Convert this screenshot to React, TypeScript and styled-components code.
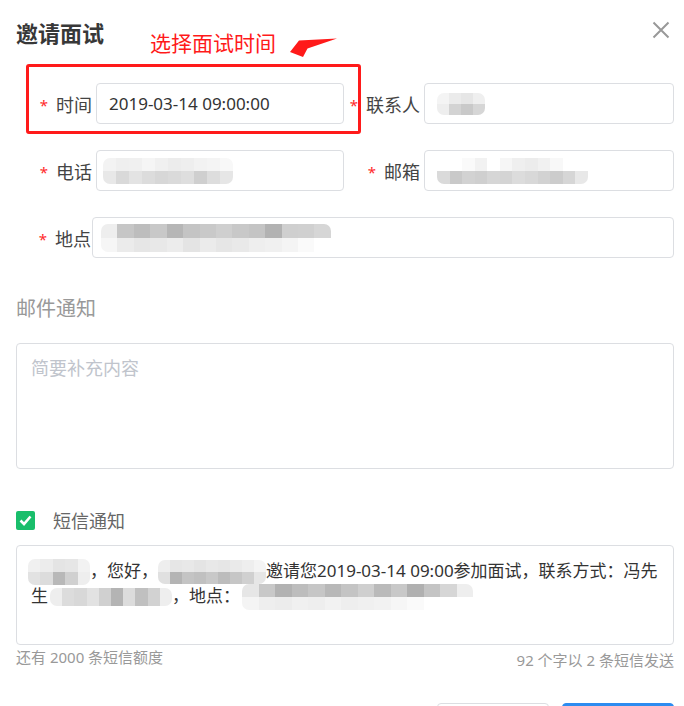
import React from 'react';
import styled, { createGlobalStyle } from 'styled-components';

const GlobalStyle = createGlobalStyle`
  html, body { margin: 0; padding: 0; background: #fff; }
  body { font-family: "Noto Sans", "Noto Sans CJK SC", sans-serif; color: #333; }
  * { box-sizing: border-box; }
`;

const Modal = styled.div`
  position: relative;
  width: 684px;
  height: 706px;
  overflow: hidden;
  padding: 0 10px 0 16px;
`;

const Header = styled.header`
  height: 83px;
  padding-top: 17px;
`;

const Title = styled.h2`
  margin: 0;
  font-size: 22px;
  line-height: 30px;
  font-weight: 700;
  color: #383838;
  font-family: "Noto Sans CJK SC", sans-serif;
`;

const Annotation = styled.div`
  position: absolute;
  left: 150px;
  top: 27px;
  font-size: 21px;
  line-height: 30px;
  color: #ff1a1a;
  font-family: "Noto Sans CJK SC", sans-serif;
`;

const Arrow = styled.svg`
  position: absolute;
  left: 288px;
  top: 37px;
`;

const Highlight = styled.div`
  position: absolute;
  left: 26px;
  top: 64px;
  width: 335px;
  height: 70px;
  border: 3px solid #ff1a1a;
  border-radius: 3px;
  pointer-events: none;
`;

const Close = styled.button`
  position: absolute;
  top: 20px;
  right: 13px;
  width: 20px;
  height: 20px;
  padding: 0;
  border: 0;
  background: transparent;
  display: flex;
  align-items: center;
  justify-content: center;
  cursor: pointer;
`;

const Form = styled.div`
  display: flex;
  flex-direction: column;
  gap: 26px;
`;

const Row = styled.div<{ $cols: string }>`
  display: grid;
  grid-template-columns: ${(p) => p.$cols};
`;

const Field = styled.div`
  display: flex;
  align-items: center;
`;

const Label = styled.label<{ $w: number; $gap: number }>`
  width: ${(p) => p.$w}px;
  flex: none;
  margin-right: ${(p) => p.$gap}px;
  text-align: right;
  font-size: 18px;
  color: #444;
  white-space: nowrap;
  font-family: "Noto Sans CJK SC", sans-serif;
`;

const Star = styled.span`
  color: #ff2a2a;
  font-size: 15px;
  margin-right: 8px;
  font-family: "Noto Sans", sans-serif;
  position: relative;
  top: -1px;
`;

const InputBox = styled.div`
  flex: 1;
  min-width: 0;
  height: 41px;
  border: 1px solid #dcdee2;
  border-radius: 4px;
  padding: 0 12px;
  display: flex;
  align-items: center;
  font-size: 17px;
  color: #333;
  overflow: hidden;
`;

const MosaicWrap = styled.span<{ $w: number; $h: number; $ml: number; $mv: number }>`
  display: inline-flex;
  flex-direction: column;
  vertical-align: middle;
  width: ${(p) => p.$w}px;
  height: ${(p) => p.$h}px;
  margin: ${(p) => p.$mv}px 0 ${(p) => p.$mv}px ${(p) => p.$ml}px;
  border-radius: 7px;
  overflow: hidden;
  filter: blur(0.5px);
  flex: none;
`;

const MosaicRow = styled.span`
  display: flex;
  flex: 1;
`;

const Cell = styled.span<{ $c: string }>`
  flex: 1;
  background: ${(p) => p.$c};
`;

type MosaicProps = { w: number; h: number; rows: string[][]; ml?: number; mv?: number };

const Mosaic = ({ w, h, rows, ml = 0, mv = 0 }: MosaicProps) => (
  <MosaicWrap $w={w} $h={h} $ml={ml} $mv={mv}>
    {rows.map((r, i) => (
      <MosaicRow key={i}>
        {r.map((c, j) => (
          <Cell key={j} $c={c} />
        ))}
      </MosaicRow>
    ))}
  </MosaicWrap>
);

const SectionTitle = styled.div`
  margin-top: 37px;
  font-size: 20px;
  line-height: 26px;
  color: #999;
  font-family: "Noto Sans CJK SC", sans-serif;
`;

const TextArea = styled.textarea<{ $h: number; $mt: number }>`
  display: block;
  width: 100%;
  height: ${(p) => p.$h}px;
  margin-top: ${(p) => p.$mt}px;
  border: 1px solid #dcdee2;
  border-radius: 4px;
  padding: 11px 14px;
  font-family: "Noto Sans", "Noto Sans CJK SC", sans-serif;
  font-size: 18px;
  line-height: 26px;
  color: #333;
  resize: none;
  outline: none;
  &::placeholder { color: #c0c4cc; }
`;

const CheckRow = styled.label`
  display: flex;
  align-items: center;
  margin-top: 39px;
  height: 24px;
`;

const CheckBox = styled.span`
  width: 19px;
  height: 19px;
  border-radius: 2px;
  background: #19be6b;
  display: flex;
  align-items: center;
  justify-content: center;
  margin-right: 18px;
`;

const CheckText = styled.span`
  font-size: 18px;
  color: #666;
  font-family: "Noto Sans CJK SC", sans-serif;
`;

const SmsBox = styled.div`
  margin-top: 13px;
  height: 100px;
  border: 1px solid #dcdee2;
  border-radius: 4px;
  padding: 12px 14px;
  font-size: 17px;
  line-height: 25px;
  color: #333;
`;

const Footer = styled.div`
  display: flex;
  justify-content: space-between;
  font-size: 15px;
  line-height: 20px;
  color: #999;
  margin-top: 2px;
`;

const Hint = styled.span<{ $pt: number }>`
  padding-top: ${(p) => p.$pt}px;
`;

const Actions = styled.div`
  display: flex;
  justify-content: flex-end;
  gap: 13px;
  margin-top: 33px;
`;

const Button = styled.button<{ $primary?: boolean }>`
  width: 112px;
  height: 36px;
  border-radius: 4px;
  font-size: 15px;
  font-family: "Noto Sans CJK SC", sans-serif;
  border: 1px solid ${(p) => (p.$primary ? '#2d8cf0' : '#dcdee2')};
  background: ${(p) => (p.$primary ? '#2d8cf0' : '#fff')};
  color: ${(p) => (p.$primary ? '#fff' : '#515a6e')};
`;

const M = {
  contact: [
    ['#f4f4f4', '#ebebeb', '#e6e6e6', '#efefef'],
    ['#eeeeee', '#d3d3d3', '#c9c9c9', '#d6d6d6'],
  ],
  phone: [
    ['#f3f3f3', '#efefef', '#f0f0f0', '#f5f5f5', '#f0f0f0', '#ececec', '#eeeeee', '#f2f2f2', '#f4f4f4', '#f8f8f8'],
    ['#e8e8e8', '#d9d9d9', '#e3e3e3', '#dcdcdc', '#d7d7d7', '#dadada', '#dedede', '#cfcfcf', '#dddddd', '#e6e6e6'],
  ],
  email: [
    ['#ffffff', '#ffffff', '#fafafa', '#f2f2f2', '#ffffff', '#f6f6f6', '#efefef', '#ececec', '#f1f1f1', '#f8f8f8', '#ffffff', '#ffffff'],
    ['#dadada', '#c9c9c9', '#d2d2d2', '#cfcfcf', '#d6d6d6', '#d4d4d4', '#dcdcdc', '#d8d8d8', '#d2d2d2', '#cccccc', '#d6d6d6', '#e8e8e8'],
  ],
  address: [
    ['#eeeeee', '#c6c6c6', '#bdbdbd', '#c8c8c8', '#b6b6b6', '#c4c4c4', '#c9c9c9', '#cfcfcf', '#c8c8c8', '#c4c4c4', '#b2b2b2', '#cfcfcf', '#d0d0d0', '#d6d6d6'],
    ['#f6f6f6', '#ebebeb', '#e6e6e6', '#e8e8e8', '#ececec', '#e4e4e4', '#ebebeb', '#e6e6e6', '#e9e9e9', '#eeeeee', '#f0f0f0', '#f4f4f4', '#fafafa', '#ffffff'],
  ],
  smsA: [
    ['#f0f0f0', '#ececec', '#e4e4e4', '#e6e6e6', '#f2f2f2'],
    ['#e2e2e2', '#dcdcdc', '#b8b8b8', '#d0d0d0', '#eeeeee'],
  ],
  smsB: [
    ['#eeeeee', '#e6e6e6', '#e8e8e8', '#e4e4e4', '#e8e8e8', '#e6e6e6', '#eaeaea', '#eeeeee', '#f4f4f4'],
    ['#e0e0e0', '#b4b4b4', '#c4c4c4', '#c0c0c0', '#c8c8c8', '#bcbcbc', '#c6c6c6', '#d0d0d0', '#e6e6e6'],
  ],
  smsC: [
    ['#eeeeee', '#dcdcdc', '#d8d8d8', '#e2e2e2', '#d0d0d0', '#b4b4b4', '#dcdcdc', '#c0c0c0', '#d2d2d2', '#eeeeee'],
  ],
  smsD: [
    ['#e6e6e6', '#c8c8c8', '#b2b2b2', '#bdbdbd', '#c6c6c6', '#b8b8b8', '#c4c4c4', '#cfcfcf', '#bababa', '#c8c8c8', '#b0b0b0', '#c4c4c4', '#d6d6d6', '#eeeeee'],
    ['#f4f4f4', '#eeeeee', '#ececec', '#f0f0f0', '#eeeeee', '#f2f2f2', '#eeeeee', '#f0f0f0', '#f2f2f2', '#f6f6f6', '#fafafa', '#ffffff', '#ffffff', '#ffffff'],
  ],
};

export default function App() {
  return (
    <>
      <GlobalStyle />
      <Modal>
        <Header>
          <Title>邀请面试</Title>
        </Header>
        <Annotation>选择面试时间</Annotation>
        <Arrow width="52" height="24" viewBox="0 0 52 24">
          <polygon points="2,15 11,3.5 49,1.5 19.5,11.5 15,20" fill="#ff1a1a" />
        </Arrow>
        <Close aria-label="关闭">
          <svg width="18" height="18" viewBox="0 0 18 18">
            <path d="M1.5 1.5 L16.5 16.5 M16.5 1.5 L1.5 16.5" stroke="#999" strokeWidth="2" />
          </svg>
        </Close>

        <Form>
          <Row $cols="328px 1fr">
            <Field>
              <Label $w={76} $gap={4}><Star>*</Star>时间</Label>
              <InputBox>2019-03-14 09:00:00</InputBox>
            </Field>
            <Field>
              <Label $w={76} $gap={4}><Star>*</Star>联系人</Label>
              <InputBox><Mosaic w={48} h={22} rows={M.contact} /></InputBox>
            </Field>
          </Row>
          <Row $cols="328px 1fr">
            <Field>
              <Label $w={76} $gap={4}><Star>*</Star>电话</Label>
              <InputBox><Mosaic w={130} h={26} rows={M.phone} ml={-6} /></InputBox>
            </Field>
            <Field>
              <Label $w={76} $gap={4}><Star>*</Star>邮箱</Label>
              <InputBox><Mosaic w={151} h={26} rows={M.email} /></InputBox>
            </Field>
          </Row>
          <Row $cols="1fr">
            <Field>
              <Label $w={75} $gap={1}><Star>*</Star>地点</Label>
              <InputBox><Mosaic w={230} h={28} rows={M.address} ml={-4} /></InputBox>
            </Field>
          </Row>
        </Form>

        <Highlight />

        <SectionTitle>邮件通知</SectionTitle>
        <TextArea $h={126} $mt={22} placeholder="简要补充内容" readOnly />

        <CheckRow>
          <CheckBox>
            <svg width="13" height="11" viewBox="0 0 13 11">
              <path d="M1.5 5.5 L5 9 L11.5 1.5" stroke="#fff" strokeWidth="2.6" fill="none" />
            </svg>
          </CheckBox>
          <CheckText>短信通知</CheckText>
        </CheckRow>

        <SmsBox>
          <Mosaic w={62} h={26} rows={M.smsA} ml={-3} mv={-3} />
          ，您好，
          <Mosaic w={108} h={24} rows={M.smsB} mv={-3} />
          邀请您2019-03-14 09:00参加面试，联系方式：冯先
          <br />
          生<Mosaic w={122} h={18} rows={M.smsC} ml={2} />
          ，地点：
          <Mosaic w={231} h={26} rows={M.smsD} ml={2} mv={-3} />
        </SmsBox>

        <Footer>
          <Hint $pt={0}>还有 2000 条短信额度</Hint>
          <Hint $pt={3}>92 个字以 2 条短信发送</Hint>
        </Footer>

        <Actions>
          <Button>取消</Button>
          <Button $primary>确定</Button>
        </Actions>
      </Modal>
    </>
  );
}
